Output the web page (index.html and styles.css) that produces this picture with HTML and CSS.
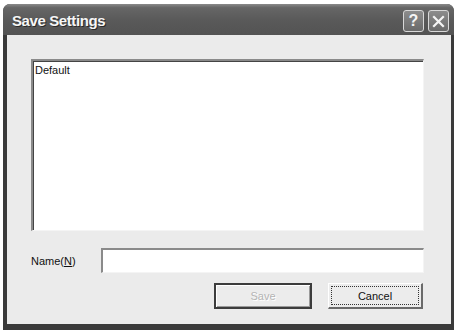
FILE: index.html
```html
<!DOCTYPE html>
<html lang="en">
<head>
<meta charset="UTF-8">
<title>Save Settings</title>
<link rel="stylesheet" href="styles.css">
</head>
<body>

<div class="window">
    <div class="titlebar">
        <span class="title">Save Settings</span>
        <div class="caption-buttons">
            <div class="cap-btn">?</div>
            <div class="cap-btn">
                <svg width="13" height="13" viewBox="0 0 13 13">
                    <path d="M2 2 L11 11 M11 2 L2 11" stroke="#f4f4f4" stroke-width="2.2" stroke-linecap="square"/>
                </svg>
            </div>
        </div>
    </div>

    <div class="client">
        <div class="listbox">
            <div class="item">Default</div>
        </div>

        <div class="name-row">
            <label class="label">Name(<u>N</u>)</label>
            <div class="textbox"></div>
        </div>

        <div class="button-row">
            <div class="btn btn-default disabled">Save</div>
            <div class="btn focused"><span class="focus">Cancel</span></div>
        </div>
    </div>
</div>

</body>
</html>
```

FILE: styles.css
```css
body {
    margin: 0;
    padding: 0;
    background: #ffffff;
    font-family: "Liberation Sans", Arial, sans-serif;
}
.window {
    margin: 4px 3px 2px 3px;
    height: 326px;
    background: #3a3a3a;
    border-radius: 7px 7px 0 0;
    display: flex;
    flex-direction: column;
    box-sizing: border-box;
    padding: 0 3px 6px 4px;
}
.titlebar {
    height: 31px;
    display: flex;
    align-items: center;
    justify-content: space-between;
    margin: 0 -3px 0 -4px;
    padding: 0 5px 0 9px;
    border-radius: 7px 7px 0 0;
    background: linear-gradient(to bottom, #8a8a8a 0%, #666666 12%, #5a5a5a 50%, #535353 100%);
}
.title {
    color: #f6f6f6;
    font-weight: bold;
    font-size: 15px;
    letter-spacing: -0.4px;
    text-shadow: 1px 1px 0 #2a2a2a;
    padding-top: 2px;
}
.caption-buttons {
    display: flex;
    gap: 4px;
    padding-top: 3px;
}
.cap-btn {
    width: 19px;
    height: 20px;
    border: 1px solid #d8d8d8;
    border-radius: 3px;
    background: linear-gradient(to bottom, #8c8c8c, #6a6a6a);
    color: #f4f4f4;
    font-weight: bold;
    font-size: 16px;
    display: flex;
    align-items: center;
    justify-content: center;
}
.client {
    flex: 1;
    background: #ebebeb;
    padding: 24px 0 0 24px;
}
.listbox {
    width: 393px;
    height: 172px;
    box-sizing: border-box;
    background: #ffffff;
    border-top: 2px solid #8a8a8a;
    border-left: 2px solid #8a8a8a;
    border-right: 1px solid #f4f4f4;
    border-bottom: 1px solid #f4f4f4;
    box-shadow: inset 1px 1px 0 #444444;
}
.item {
    font-size: 11px;
    color: #111111;
    padding: 3px 0 0 2px;
}
.name-row {
    display: flex;
    align-items: center;
    margin-top: 17px;
}
.label {
    width: 70px;
    font-size: 11px;
    color: #111111;
}
.textbox {
    width: 323px;
    height: 25px;
    box-sizing: border-box;
    background: #ffffff;
    border-top: 2px solid #8a8a8a;
    border-left: 2px solid #8a8a8a;
    border-right: 1px solid #f4f4f4;
    border-bottom: 1px solid #f4f4f4;
}
.button-row {
    display: flex;
    gap: 16px;
    margin: 10px 0 0 183px;
}
.btn {
    width: 95px;
    height: 26px;
    box-sizing: border-box;
    font-size: 11px;
    color: #111111;
    background: #ececec;
    border-top: 1px solid #ffffff;
    border-left: 1px solid #ffffff;
    border-right: 2px solid #6a6a6a;
    border-bottom: 2px solid #6a6a6a;
    display: flex;
    align-items: center;
    justify-content: center;
}
.btn-default {
    width: 98px;
    border: 2px solid #3c3c3c;
    box-shadow: inset 1px 1px 0 #ffffff, inset -1px -1px 0 #9a9a9a;
}
.disabled {
    color: #b4b4b4;
    text-shadow: 1px 1px 0 #ffffff;
}
.focused {
    padding: 2px;
}
.focus {
    flex: 1;
    align-self: stretch;
    border: 1px dotted #333333;
    display: flex;
    align-items: center;
    justify-content: center;
}
```
